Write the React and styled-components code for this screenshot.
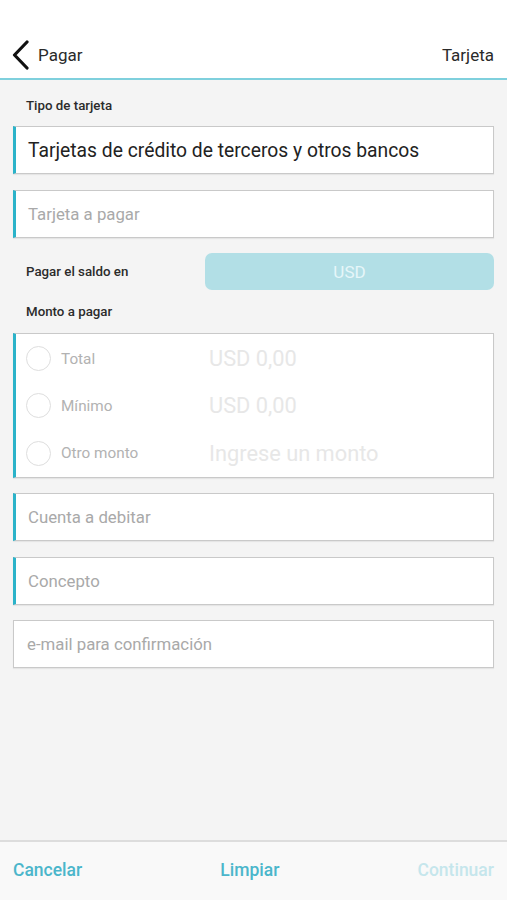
import React from "react";
import styled, { createGlobalStyle } from "styled-components";

const Global = createGlobalStyle`
  html, body { margin: 0; padding: 0; background: #f4f4f4; }
  body { font-family: Roboto, "Noto Sans", sans-serif; }
  * { box-sizing: border-box; }
`;

const Screen = styled.div`
  width: 507px;
  height: 900px;
  display: flex;
  flex-direction: column;
  background: #f4f4f4;
`;

const Header = styled.header`
  height: 80px;
  background: #ffffff;
  border-bottom: 2px solid #7fd0dd;
  display: flex;
  align-items: center;
  justify-content: space-between;
  padding: 31px 13px 0 11px;
`;

const Back = styled.div`
  display: flex;
  align-items: center;
  gap: 8px;
  font-size: 17px;
  color: #2a2a2a;
`;

const HeaderTitle = styled.div`
  font-size: 17px;
  color: #2a2a2a;
`;

const Body = styled.main`
  flex: 1;
  padding: 14px 13px 0 13px;
  display: flex;
  flex-direction: column;
`;

const Label = styled.div`
  font-size: 13.3px;
  font-weight: 500;
  color: #2b2b2b;
  padding-left: 13px;
  height: ${(p) => p.$h || 22}px;
  display: flex;
  align-items: center;
`;

const Field = styled.div`
  height: 48px;
  background: #ffffff;
  border: 1px solid #c9c9c9;
  border-left: ${(p) => (p.$accent ? "3px solid #2bb3c9" : "1px solid #c9c9c9")};
  box-shadow: 0 1px 1px rgba(0, 0, 0, 0.06);
  display: flex;
  align-items: center;
  padding-left: ${(p) => (p.$accent ? 12 : 13)}px;
  margin-top: ${(p) => p.$mt || 0}px;
  font-size: ${(p) => (p.$filled ? 19.3 : 16.8)}px;
  color: ${(p) => (p.$filled ? "#222" : "#a9a9a9")};
`;

const SaldoRow = styled.div`
  display: flex;
  align-items: center;
  justify-content: space-between;
  margin-top: 15px;
  height: 37px;
`;

const CurrencyButton = styled.div`
  width: 289px;
  height: 37px;
  border-radius: 7px;
  background: #b2dfe6;
  color: #e6f6f9;
  font-size: 17px;
  display: flex;
  align-items: center;
  justify-content: center;
`;

const RadioBox = styled.div`
  background: #ffffff;
  border: 1px solid #c9c9c9;
  border-left: 3px solid #2bb3c9;
  box-shadow: 0 1px 1px rgba(0, 0, 0, 0.06);
  display: flex;
  flex-direction: column;
  padding: 1px 0 0 0;
`;

const RadioRow = styled.div`
  height: 47.3px;
  display: grid;
  grid-template-columns: 35px 148px 1fr;
  align-items: center;
  padding-left: 10px;
`;

const Circle = styled.span`
  width: 25px;
  height: 25px;
  border-radius: 50%;
  border: 1.5px solid #dedede;
`;

const RadioLabel = styled.span`
  font-size: 15.3px;
  color: #b2b2b2;
`;

const Amount = styled.span`
  font-size: 21.8px;
  color: #e7e7e7;
`;

const Footer = styled.footer`
  height: 60px;
  border-top: 2px solid #dddddd;
  background: #f9f9f9;
  display: flex;
  align-items: center;
  justify-content: space-between;
  padding: 0 13px 2px 13px;
`;

const FooterButton = styled.span`
  font-size: 17.5px;
  font-weight: 500;
  color: ${(p) => (p.$disabled ? "#c5e6ec" : "#4bb6cb")};
`;

export default function App() {
  return (
    <Screen>
      <Global />
      <Header>
        <Back>
          <svg width="19" height="30" viewBox="0 0 19 30">
            <path d="M16 2 L3.5 15 L16 28" fill="none" stroke="#111" strokeWidth="3.2" strokeLinecap="round" strokeLinejoin="round" />
          </svg>
          <span>Pagar</span>
        </Back>
        <HeaderTitle>Tarjeta</HeaderTitle>
      </Header>
      <Body>
        <Label $h={22}>Tipo de tarjeta</Label>
        <Field $accent $filled $mt={10}>Tarjetas de crédito de terceros y otros bancos</Field>
        <Field $accent $mt={16}>Tarjeta a pagar</Field>
        <SaldoRow>
          <Label $h={37}>Pagar el saldo en</Label>
          <CurrencyButton>USD</CurrencyButton>
        </SaldoRow>
        <Label $h={43}>Monto a pagar</Label>
        <RadioBox>
          <RadioRow>
            <Circle />
            <RadioLabel>Total</RadioLabel>
            <Amount>USD 0,00</Amount>
          </RadioRow>
          <RadioRow>
            <Circle />
            <RadioLabel>Mínimo</RadioLabel>
            <Amount>USD 0,00</Amount>
          </RadioRow>
          <RadioRow>
            <Circle />
            <RadioLabel>Otro monto</RadioLabel>
            <Amount>Ingrese un monto</Amount>
          </RadioRow>
        </RadioBox>
        <Field $accent $mt={15}>Cuenta a debitar</Field>
        <Field $accent $mt={16}>Concepto</Field>
        <Field $mt={15}>e-mail para confirmación</Field>
      </Body>
      <Footer>
        <FooterButton>Cancelar</FooterButton>
        <FooterButton>Limpiar</FooterButton>
        <FooterButton $disabled>Continuar</FooterButton>
      </Footer>
    </Screen>
  );
}
